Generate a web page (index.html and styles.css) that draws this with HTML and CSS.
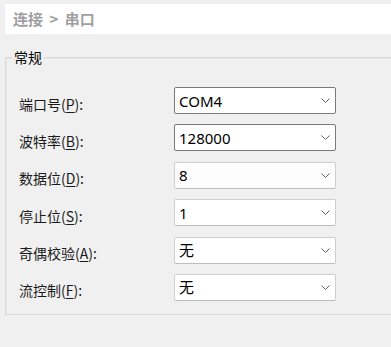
FILE: index.html
```html
<!DOCTYPE html>
<html lang="zh-CN">
<head>
  <meta charset="UTF-8">
  <meta name="viewport" content="width=device-width, initial-scale=1.0">
  <title>串口设置</title>
  <link rel="stylesheet" href="styles.css">
</head>
<body>
  <div class="breadcrumb">连接 &gt; 串口</div>

  <fieldset class="group">
    <legend>常规</legend>
    <div class="form-grid">
      <label class="field-label">端口号(<u>P</u>):</label>
      <div class="combo active"><span>COM4</span>
        <svg class="chevron" width="9" height="5" viewBox="0 0 9 5"><path d="M0.5 0.5 L4.5 4.5 L8.5 0.5" fill="none" stroke="#606060" stroke-width="1"/></svg>
      </div>

      <label class="field-label">波特率(<u>B</u>):</label>
      <div class="combo active"><span>128000</span>
        <svg class="chevron" width="9" height="5" viewBox="0 0 9 5"><path d="M0.5 0.5 L4.5 4.5 L8.5 0.5" fill="none" stroke="#606060" stroke-width="1"/></svg>
      </div>

      <label class="field-label">数据位(<u>D</u>):</label>
      <div class="combo soft"><span>8</span>
        <svg class="chevron" width="9" height="5" viewBox="0 0 9 5"><path d="M0.5 0.5 L4.5 4.5 L8.5 0.5" fill="none" stroke="#606060" stroke-width="1"/></svg>
      </div>

      <label class="field-label">停止位(<u>S</u>):</label>
      <div class="combo"><span>1</span>
        <svg class="chevron" width="9" height="5" viewBox="0 0 9 5"><path d="M0.5 0.5 L4.5 4.5 L8.5 0.5" fill="none" stroke="#606060" stroke-width="1"/></svg>
      </div>

      <label class="field-label">奇偶校验(<u>A</u>):</label>
      <div class="combo"><span>无</span>
        <svg class="chevron" width="9" height="5" viewBox="0 0 9 5"><path d="M0.5 0.5 L4.5 4.5 L8.5 0.5" fill="none" stroke="#606060" stroke-width="1"/></svg>
      </div>

      <label class="field-label">流控制(<u>F</u>):</label>
      <div class="combo"><span>无</span>
        <svg class="chevron" width="9" height="5" viewBox="0 0 9 5"><path d="M0.5 0.5 L4.5 4.5 L8.5 0.5" fill="none" stroke="#606060" stroke-width="1"/></svg>
      </div>
    </div>
  </fieldset>
</body>
</html>
```

FILE: styles.css
```css
body {
  margin: 0;
  background: #f0f0f0;
  font-family: "Noto Sans", "Noto Sans CJK SC", sans-serif;
  color: #000;
  overflow: hidden;
}

.breadcrumb {
  margin: 4px 0 0 5px;
  height: 30px;
  padding-left: 8px;
  background: #fff;
  color: #a0a0a0;
  font-family: "Noto Sans CJK SC", sans-serif;
  font-weight: bold;
  font-size: 15px;
  line-height: 30px;
  word-spacing: 3px;
}

.group {
  margin: 15px -8px 0 5px;
  padding: 22px 13px 13px 13px;
  border: 1px solid #d9d9d9;
  box-shadow: inset 1px 1px 0 #e6e6e6;
  min-width: 0;
}

.group legend {
  margin-left: -7px;
  padding: 0 2px;
  font-family: "Noto Sans CJK SC", sans-serif;
  font-size: 14px;
  line-height: 16px;
}

.form-grid {
  display: grid;
  grid-template-columns: 155px 162px;
  grid-auto-rows: 27px;
  row-gap: 10.4px;
  align-items: center;
}

.field-label {
  font-family: "Noto Sans CJK SC", sans-serif;
  font-size: 14px;
  line-height: 16px;
  padding-top: 6px;
  color: #1a1a1a;
}

.field-label u {
  text-underline-offset: 2px;
}

.combo {
  height: 27px;
  box-sizing: border-box;
  display: flex;
  align-items: center;
  justify-content: space-between;
  padding: 0 5px 0 4px;
  background: #fff;
  border: 1px solid #cfcfcf;
  border-bottom-color: #bdbdbd;
  border-radius: 2px;
  font-size: 15px;
}

.combo span {
  font-family: "Noto Sans", "Noto Sans CJK SC", sans-serif;
  line-height: 20px;
}

.combo.active {
  border-color: #7a7a7a;
}

.combo.soft {
  background: #fcfcfc;
}

.chevron {
  display: block;
}
```
